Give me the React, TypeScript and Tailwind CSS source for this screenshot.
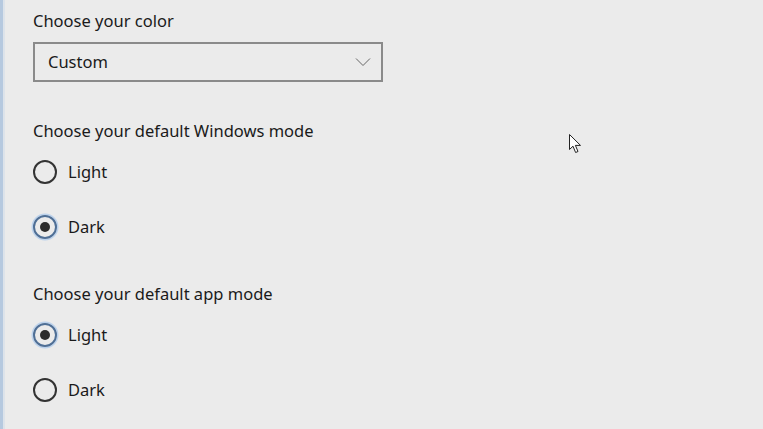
import React from 'react';

const font = { fontFamily: '"Segoe UI", "Noto Sans", "Open Sans", sans-serif' };

function Radio({ label, checked }: { label: string; checked?: boolean }) {
  return (
    <div className="flex items-center gap-[11px] h-[24px]">
      {checked ? (
        <div className="w-[24px] h-[24px] rounded-full border-2 border-[#4f6f96] shadow-[0_0_0_1.5px_#bcd2ec] flex items-center justify-center">
          <div className="w-[10px] h-[10px] rounded-full bg-[#2b2b2b]" />
        </div>
      ) : (
        <div className="w-[24px] h-[24px] rounded-full border-2 border-[#333333]" />
      )}
      <span className="text-[16.5px] text-[#1a1a1a]">{label}</span>
    </div>
  );
}

export default function App() {
  return (
    <div className="relative w-[763px] h-[429px] bg-[#ebebeb] flex overflow-hidden" style={font}>
      {/* Left edge strip */}
      <div className="w-[3px] h-full bg-[#b6c9df]" />
      <div className="w-[2px] h-full bg-[#dde3ea]" />

      <div className="flex flex-col pl-[28px] pt-[8px]">
        <div className="text-[16.5px] text-[#1a1a1a] leading-[26px]">Choose your color</div>
        <div className="mt-[8px] w-[350px] h-[40px] border-2 border-[#8a8a8a] flex items-center justify-between pl-[13px] pr-[10px]">
          <span className="text-[16.5px] text-[#1a1a1a]">Custom</span>
          <svg width="16" height="10" viewBox="0 0 16 10" fill="none">
            <path d="M1 1.5 L8 8.5 L15 1.5" stroke="#666" strokeWidth="1" />
          </svg>
        </div>

        <div className="mt-[36px] text-[16.5px] text-[#1a1a1a] leading-[26px]">Choose your default Windows mode</div>
        <div className="mt-[16px] flex flex-col gap-[31px]">
          <Radio label="Light" />
          <Radio label="Dark" checked />
        </div>

        <div className="mt-[42px] text-[16.5px] text-[#1a1a1a] leading-[26px]">Choose your default app mode</div>
        <div className="mt-[16px] flex flex-col gap-[31px]">
          <Radio label="Light" checked />
          <Radio label="Dark" />
        </div>
      </div>

      {/* Mouse cursor */}
      <svg className="absolute left-[569px] top-[134px]" width="13" height="20" viewBox="0 0 13 20">
        <path d="M0.5 0.5 L0.5 15.5 L4 12.2 L6.6 18.5 L9 17.5 L6.4 11.4 L11.5 11.4 Z" fill="#fff" stroke="#222" strokeWidth="1" strokeLinejoin="round" />
      </svg>
    </div>
  );
}
